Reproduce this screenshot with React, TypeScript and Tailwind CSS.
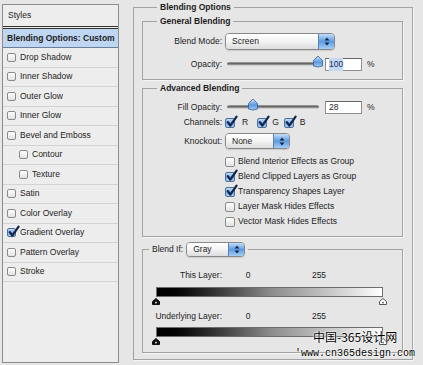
import React from "react";

const styleRows = [
  { t: "Drop Shadow" },
  { t: "Inner Shadow" },
  { t: "Outer Glow" },
  { t: "Inner Glow" },
  { t: "Bevel and Emboss" },
  { t: "Contour", indent: true },
  { t: "Texture", indent: true },
  { t: "Satin" },
  { t: "Color Overlay" },
  { t: "Gradient Overlay", checked: true },
  { t: "Pattern Overlay" },
  { t: "Stroke" },
];

const options = [
  { t: "Blend Interior Effects as Group", checked: false },
  { t: "Blend Clipped Layers as Group", checked: true },
  { t: "Transparency Shapes Layer", checked: true },
  { t: "Layer Mask Hides Effects", checked: false },
  { t: "Vector Mask Hides Effects", checked: false },
];

function Check() {
  return (
    <svg
      width="12"
      height="12"
      viewBox="0 0 12 12"
      className="absolute left-[0px] top-[-3px] overflow-visible"
    >
      <path
        d="M1.8 6.2 L4.3 9.6 L10.6 0.6"
        fill="none"
        stroke="#14234a"
        strokeWidth="2.2"
        strokeLinecap="round"
        strokeLinejoin="round"
      />
    </svg>
  );
}

function Box({ checked, small }: { checked?: boolean; small?: boolean }) {
  const size = small ? "w-[9px] h-[9px]" : "w-[10px] h-[10px]";
  const fill = checked
    ? "bg-linear-to-b from-[#c6defa] via-[#6ea6e6] to-[#a9cdf4] border-[#4f6f99]"
    : "bg-linear-to-b from-white to-[#e2e2e2] border-[#8a8a8a]";
  return (
    <span className={`relative shrink-0 rounded-[2px] border ${size} ${fill}`}>
      {checked && <Check />}
    </span>
  );
}

function Select({ label, cls }: { label: string; cls: string }) {
  return (
    <div
      className={`flex overflow-hidden rounded-[4px] border border-[#888] shadow-[0_1px_1px_rgba(0,0,0,0.12)] ${cls}`}
    >
      <div className="flex flex-1 items-center bg-linear-to-b from-white via-[#f3f3f3] to-[#dcdcdc] pl-[6px]">
        {label}
      </div>
      <div className="flex w-[16px] items-center justify-center border-l border-[#5b80b2] bg-linear-to-b from-[#c4def9] via-[#5c9be2] to-[#a6cdf5]">
        <svg width="6" height="9" viewBox="0 0 6 9">
          <path d="M0.6 3.6 L3 0.6 L5.4 3.6 Z" fill="#15213d" />
          <path d="M0.6 5.4 L3 8.4 L5.4 5.4 Z" fill="#15213d" />
        </svg>
      </div>
    </div>
  );
}

function Slider({ pos, id }: { pos: number; id: string }) {
  return (
    <svg width="96" height="13" viewBox="0 0 96 13" className="block overflow-visible">
      <defs>
        <linearGradient id={id + "t"} x1="0" y1="0" x2="0" y2="1">
          <stop offset="0" stopColor="#3f3f3f" />
          <stop offset="1" stopColor="#b8b8b8" />
        </linearGradient>
        <linearGradient id={id + "k"} x1="0" y1="0" x2="0" y2="1">
          <stop offset="0" stopColor="#d6e8fc" />
          <stop offset="0.55" stopColor="#5a99e0" />
          <stop offset="1" stopColor="#a3cbf4" />
        </linearGradient>
      </defs>
      <rect x="0" y="4.5" width="92" height="3" rx="1.5" fill={`url(#${id}t)`} />
      <path
        d={`M${pos - 4.5} 8 V2.5 L${pos} -2 L${pos + 4.5} 2.5 V8 Q${pos} 10 ${pos - 4.5} 8 Z`}
        fill={`url(#${id}k)`}
        stroke="#2e5f9c"
        strokeWidth="0.8"
      />
    </svg>
  );
}

function Field({ children }: { children: React.ReactNode }) {
  return (
    <div className="flex h-[13px] w-[37px] items-center border border-[#8f8f8f] border-t-[#666] bg-white pl-[3px]">
      {children}
    </div>
  );
}

function Marker({ dark }: { dark?: boolean }) {
  return (
    <svg width="8" height="7" viewBox="0 0 8 7" className="block">
      <path
        d="M4 0.5 L7.5 3.5 V6.5 H0.5 V3.5 Z"
        fill={dark ? "#111" : "#fff"}
        stroke={dark ? "#111" : "#555"}
        strokeWidth="1"
      />
      <circle cx="4" cy="4.6" r="0.9" fill={dark ? "#fff" : "#555"} />
    </svg>
  );
}

export default function App() {
  return (
    <div className="relative flex h-[365px] w-[423px] items-start overflow-hidden bg-[#e6e6e6] font-['Liberation_Sans',Arial,sans-serif] text-[8.5px] text-[#1c1c1c]">
      {/* Styles list */}
      <div className="ml-[2px] mt-[4px] flex h-[359px] w-[117px] flex-col border border-[#8c8c8c] bg-[#ededed]">
        <div className="flex h-[24px] items-center border-b-[3px] border-double border-[#333] pl-[5px]">
          Styles
        </div>
        <div className="flex h-[19px] items-center border-b border-[#6a7f9c] bg-[#bfd6f2] pl-[4px] font-bold">
          Blending Options: Custom
        </div>
        {styleRows.map((r) => (
          <div
            key={r.t}
            className={`flex h-[19.5px] items-center gap-[4px] border-b border-[#d3d3d3] ${
              r.indent ? "pl-[16px]" : "pl-[4px]"
            }`}
          >
            <Box small checked={r.checked} />
            <span>{r.t}</span>
          </div>
        ))}
      </div>

      {/* Blending options */}
      <fieldset className="ml-[14px] mt-[2px] w-[280px] border border-[#a2a2a2] px-[8px] pb-[6px] shadow-[1px_1px_0_#f6f6f6]">
        <legend className="ml-[15px] px-[3px] font-bold leading-[11px]">Blending Options</legend>

        <fieldset className="mt-[3px] w-[261px] border border-[#a2a2a2] shadow-[1px_1px_0_#f6f6f6]">
          <legend className="ml-[14px] px-[3px] font-bold leading-[11px]">General Blending</legend>
          <div className="flex flex-col gap-[8px] pb-[8px] pt-[6px]">
            <div className="flex h-[17px] items-center">
              <span className="w-[79px] text-right">Blend Mode:</span>
              <Select label="Screen" cls="ml-[3px] w-[110px] h-[17px]" />
            </div>
            <div className="flex h-[13px] items-center">
              <span className="w-[79px] text-right">Opacity:</span>
              <span className="ml-[5px]">
                <Slider pos={91} id="op" />
              </span>
              <span className="ml-[2px]">
                <Field>
                  <span className="bg-[#c3d8f3] text-[#1a2c55]">100</span>
                </Field>
              </span>
              <span className="ml-[5px]">%</span>
            </div>
          </div>
        </fieldset>

        <fieldset className="mt-[3px] w-[261px] border border-[#a2a2a2] shadow-[1px_1px_0_#f6f6f6]">
          <legend className="ml-[14px] px-[3px] font-bold leading-[11px]">Advanced Blending</legend>
          <div className="flex flex-col pb-[7px] pt-[7px]">
            <div className="flex h-[13px] items-center">
              <span className="w-[79px] text-right">Fill Opacity:</span>
              <span className="ml-[5px]">
                <Slider pos={26} id="fo" />
              </span>
              <span className="ml-[2px]">
                <Field>28</Field>
              </span>
              <span className="ml-[5px]">%</span>
            </div>
            <div className="mt-[3px] flex h-[11px] items-center">
              <span className="w-[79px] text-right">Channels:</span>
              <span className="ml-[3px] flex items-center">
                <Box checked />
              </span>
              <span className="ml-[7px]">R</span>
              <span className="ml-[9px] flex items-center">
                <Box checked />
              </span>
              <span className="ml-[5px]">G</span>
              <span className="ml-[5px] flex items-center">
                <Box checked />
              </span>
              <span className="ml-[6px]">B</span>
            </div>
            <div className="mt-[5px] flex h-[16px] items-center">
              <span className="w-[79px] text-right">Knockout:</span>
              <Select label="None" cls="ml-[3px] w-[65px] h-[16px]" />
            </div>
            <div className="mt-[5px] flex flex-col">
              {options.map((o) => (
                <div key={o.t} className="flex h-[15px] items-center gap-[3px] pl-[82px]">
                  <Box checked={o.checked} />
                  <span>{o.t}</span>
                </div>
              ))}
            </div>
          </div>
        </fieldset>

        <fieldset className="mt-[4px] w-[261px] border border-[#a2a2a2] shadow-[1px_1px_0_#f6f6f6]">
          <legend className="ml-[6px] flex h-[16px] items-center gap-[3px] px-[3px]">
            <span>Blend If:</span>
            <Select label="Gray" cls="w-[59px] h-[15px]" />
          </legend>
          <div className="flex flex-col pb-[7px] pt-[12px]">
            <div className="flex h-[12px] items-center">
              <span className="w-[79px] text-right">This Layer:</span>
              <span className="w-[52px] text-center">0</span>
              <span className="w-[90px] text-center">255</span>
            </div>
            <div className="ml-[13px] mt-[6px] h-[10px] w-[227px] border border-[#6e6e6e] bg-linear-to-r from-black via-[#8a8a8a] to-white" />
            <div className="ml-[9px] mt-[1px] flex h-[7px] w-[235px] justify-between">
              <Marker dark />
              <Marker />
            </div>
            <div className="mt-[5px] flex h-[12px] items-center">
              <span className="w-[79px] text-right">Underlying Layer:</span>
              <span className="w-[52px] text-center">0</span>
              <span className="w-[90px] text-center">255</span>
            </div>
            <div className="ml-[13px] mt-[5px] h-[10px] w-[227px] border border-[#6e6e6e] bg-linear-to-r from-black via-[#8a8a8a] to-white" />
            <div className="ml-[9px] mt-[1px] flex h-[7px] w-[235px] justify-between">
              <Marker dark />
              <Marker />
            </div>
          </div>
        </fieldset>
      </fieldset>

      {/* watermark */}
      <div className="absolute left-[313px] top-[329px] font-['Noto_Sans_CJK_SC',sans-serif] text-[12px] leading-[16px] text-black [text-shadow:0_0_2px_#fff,0_0_2px_#fff,0_0_1px_#fff]">
        中国-365设计网
      </div>
      <div className="absolute left-[295px] top-[348px] font-['Liberation_Mono',monospace] text-[10px] leading-[12px] text-black [text-shadow:0_0_2px_#fff,0_0_2px_#fff,0_0_1px_#fff]">
        'www.cn365design.com
      </div>
    </div>
  );
}
